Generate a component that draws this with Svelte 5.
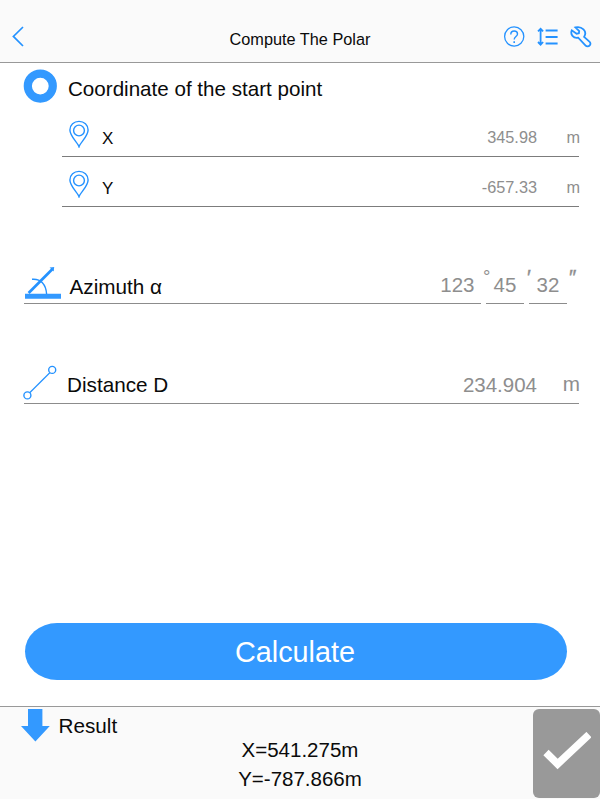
<script>
  export let title = 'Compute The Polar';
  export let azimuth = { deg: '123', min: '45', sec: '32' };
  export let distance = '234.904';
  export let result = { x: '541.275', y: '-787.866' };

  const coordinates = [
    { name: 'X', value: '345.98' },
    { name: 'Y', value: '-657.33' },
  ];
</script>

<div class="screen">
  <header class="topbar">
    <button class="back" aria-label="Back">
      <svg width="14" height="24" viewBox="0 0 14 24">
        <path d="M12 3 2.4 12.4 12 22" />
      </svg>
    </button>
    <h1>{title}</h1>
    <div class="tools">
      <svg width="22" height="22" viewBox="0 0 22 22">
        <circle cx="11.2" cy="10.5" r="9.6" stroke-width="1.3" />
        <path d="M7.8 8.4C7.8 6 9.2 5 11.2 5s3.3 1.1 3.3 2.9c0 2.5-3.3 2.6-3.3 5.5" stroke-width="1.4" />
        <path d="M11.2 15.2v1.8" stroke-width="1.6" />
      </svg>
      <svg width="22" height="22" viewBox="0 0 22 22">
        <path d="M4.6 4v13.4M2 5.4 4.6 2.8l2.5 2.6M2 16l2.6 2.6L7.1 16" stroke-width="1.8" />
        <path d="M9.6 4.6h12M9.6 11h12M9.6 17.4h12" stroke-width="2" />
      </svg>
      <svg width="23" height="22" viewBox="0 0 23 22">
        <path d="M6.4 1.4 10.2 5 9.9 7.2 7.6 7.8 2.8 4.3C1.1 8.2 4.2 12.7 9.2 11.7L16.4 19.3C17.6 20.6 19.6 20.6 20.7 19.4 21.8 18.2 21.6 16.6 20.4 15.6L15.1 10.9C18.8 4.9 12.6-.2 6.4 1.4Z" stroke-width="1.8" />
      </svg>
    </div>
  </header>

  <main>
    <section class="start">
      <svg class="ring" width="34" height="34" viewBox="0 0 34 34">
        <circle cx="17.3" cy="17.1" r="12.5" />
      </svg>
      <h2>Coordinate of the start point</h2>
    </section>

    {#each coordinates as item}
      <div class="coord">
        <svg class="pin" width="20" height="28" viewBox="0 0 20 28">
          <path d="M10 26.8C8.7 22.7.9 16.2.9 10 .9 4.9 4.9 1.4 10 1.4s9.1 3.5 9.1 8.6c0 6.2-7.8 12.7-9.1 16.8Z" />
          <circle cx="10" cy="10.5" r="5.4" />
        </svg>
        <span class="name">{item.name}</span>
        <span class="value">{item.value}</span>
        <span class="unit">m</span>
      </div>
    {/each}

    <div class="azimuth">
      <div class="segment wide">
        <svg width="38" height="34" viewBox="0 0 38 34">
          <path class="solid" d="M1 27.7h36v5H1zM25.6 1.6l4.6-.5-.5 4.4Z" />
          <path d="M4.6 27 28.5 3" stroke-width="2.7" />
          <path d="M8 13.3C16.8 12.5 22 18.3 22.6 28" stroke-width="1.4" />
        </svg>
        <span class="label">Azimuth α</span>
        <span class="number">{azimuth.deg}</span>
      </div>
      <span class="mark degree">°</span>
      <div class="segment small">{azimuth.min}</div>
      <span class="mark minute">′</span>
      <div class="segment small">{azimuth.sec}</div>
      <span class="mark second">″</span>
    </div>

    <div class="distance">
      <svg width="36" height="36" viewBox="0 0 36 36">
        <path d="m6.7 27.7 20.1-20" stroke-width="1.2" />
        <circle cx="4.4" cy="30.4" r="3.5" stroke-width="1.4" />
        <circle cx="29.2" cy="4.9" r="3.5" stroke-width="1.4" />
      </svg>
      <span class="label">Distance D</span>
      <span class="number">{distance}</span>
      <span class="unit">m</span>
    </div>

    <button class="calculate">Calculate</button>
  </main>

  <footer>
    <div class="result-title">
      <svg width="30" height="34" viewBox="0 0 30 34">
        <path class="solid" d="M8 1h14.4v17h7.4L15.4 33.6 1 18h7Z" />
      </svg>
      <span>Result</span>
    </div>
    <div class="result">
      <div>X={result.x}m</div>
      <div>Y={result.y}m</div>
    </div>
    <button class="confirm" aria-label="Confirm">
      <svg width="48" height="38" viewBox="0 0 48 38">
        <path d="M3 20.5 14.6 32 46 2.6" />
      </svg>
    </button>
  </footer>
</div>

<style>
  :global(body) {
    background: #fff;
  }

  .screen {
    width: 600px;
    height: 800px;
    box-sizing: border-box;
    padding-bottom: 1px;
    display: flex;
    flex-direction: column;
    overflow: hidden;
    font-family: 'Liberation Sans', Arial, sans-serif;
    font-size: 20.7px;
    line-height: 24px;
    color: #0a0a0a;
  }

  h1,
  h2 {
    margin: 0;
    font-weight: 400;
  }

  button {
    padding: 0;
    border: 0;
    background: none;
    font-family: inherit;
  }

  svg {
    display: block;
    flex: none;
    fill: none;
    stroke: #2492ff;
  }

  .solid {
    fill: #3399ff;
    stroke: none;
  }

  .topbar {
    flex: none;
    height: 62px;
    display: grid;
    grid-template-columns: 110px 1fr 110px;
    align-items: start;
    background: #fafafa;
    border-bottom: 1px solid #999;
  }

  .back {
    justify-self: start;
    margin: 24px 0 0 11px;
  }

  .back svg {
    stroke-width: 1.7;
  }

  h1 {
    margin-top: 27px;
    font-size: 16.3px;
    text-align: center;
  }

  .tools {
    display: flex;
    gap: 11px;
    margin: 26px 0 0 13px;
  }

  main {
    flex: 1;
    display: flex;
    flex-direction: column;
    padding: 0 21px 0 24px;
  }

  .start {
    box-sizing: border-box;
    display: flex;
    height: 44px;
    padding-top: 6px;
  }

  .ring {
    margin-left: -1px;
    stroke: #3399ff;
    stroke-width: 8.2;
  }

  h2 {
    margin: 8px 0 0 11px;
    font-size: 20.6px;
  }

  .coord {
    display: flex;
    height: 49px;
    margin-left: 38px;
    border-bottom: 1px solid #7c7c7c;
    font-size: 16.3px;
  }

  .pin {
    margin: 13px 0 0 7px;
    stroke-width: 1.4;
  }

  .name {
    margin: 20px auto 0 13px;
    font-size: 17px;
  }

  .value,
  .unit {
    margin-top: 18px;
    color: #8e8e8e;
  }

  .coord .unit,
  .distance .unit {
    width: 42px;
    margin-right: -1px;
    padding-left: 1px;
    text-align: right;
  }

  .azimuth {
    display: flex;
    margin-top: 56px;
    height: 41px;
  }

  .segment {
    box-sizing: border-box;
    border-bottom: 1px solid #8c8c8c;
    color: #8e8e8e;
  }

  .wide {
    width: 457px;
    display: flex;
    padding: 3px 6.5px 0 0;
  }

  .label {
    color: #0a0a0a;
    margin-right: auto;
  }

  .wide .label {
    margin-top: 9px;
    margin-left: 7.5px;
  }

  .number {
    color: #8e8e8e;
    font-size: 20.5px;
  }

  .wide .number {
    margin-top: 7px;
  }

  .small {
    width: 38px;
    padding: 10px 0 0 7.5px;
    font-size: 20.5px;
  }

  .mark {
    width: 5px;
    color: #8e8e8e;
    white-space: nowrap;
  }

  .degree {
    padding-top: 2px;
    text-indent: 2px;
    font-size: 18.5px;
  }

  .minute,
  .second {
    padding-top: 2px;
    -webkit-text-stroke: 0.4px #8e8e8e;
  }

  .minute {
    text-indent: 3px;
  }

  .second {
    text-indent: 2px;
  }

  .distance {
    display: flex;
    margin-top: 59px;
    height: 40px;
    border-bottom: 1px solid #8c8c8c;
  }

  .distance svg {
    margin: 2px 0 0 -1px;
  }

  .distance .label {
    margin: 10px auto 0 8px;
  }

  .distance .number {
    margin-top: 10px;
  }

  .distance .unit {
    margin-top: 9px;
  }

  .calculate {
    width: 542px;
    height: 57px;
    margin: auto 0 26px 1px;
    padding: 2px 2px 0 0;
    border-radius: 32px / 28.5px;
    background: #3399ff;
    color: #fff;
    font-size: 28.8px;
  }

  footer {
    flex: none;
    height: 92px;
    display: grid;
    grid-template-columns: 200px 1fr 200px;
    background: #fafafa;
    border-top: 1px solid #999;
  }

  .result-title {
    display: flex;
    align-items: flex-start;
    padding: 1px 0 0 20px;
  }

  .result-title span {
    margin: 6px 0 0 8.5px;
  }

  .result {
    padding-top: 28px;
    text-align: center;
    font-size: 20.5px;
    line-height: 29px;
  }

  .confirm {
    justify-self: end;
    display: flex;
    justify-content: center;
    width: 67px;
    height: 89px;
    margin-top: 2px;
    padding-top: 23px;
    border-radius: 6px;
    background: #999;
  }

  .confirm svg {
    stroke: #fff;
    stroke-width: 7.5;
  }
</style>
